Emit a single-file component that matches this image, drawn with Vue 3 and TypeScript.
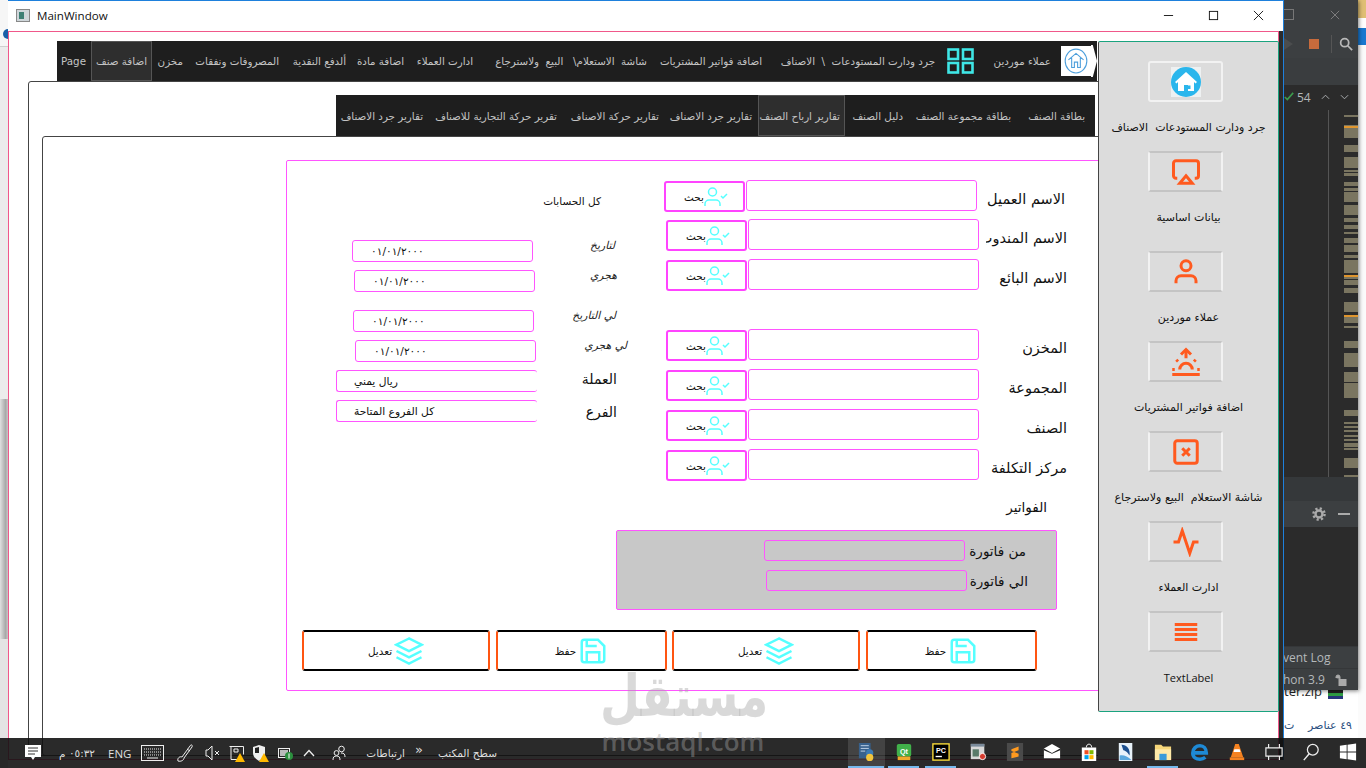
<script setup lang="ts">
interface Tab {
  label: string;
  width: number;
  pad?: number;
  icon?: string;
  active?: boolean;
}

const outerTabs: Tab[] = [
  { label: 'عملاء موردين', width: 112, pad: 6, icon: 'home' },
  { label: 'جرد ودارت المستودعات  \\  الاصناف', width: 218, pad: 11, icon: 'grid' },
  { label: 'اضافة فواتير المشتريات', width: 115 },
  { label: 'شاشة  الاستعلام\\   البيع  ولاسترجاع', width: 174 },
  { label: 'ادارت العملاء', width: 69 },
  { label: 'اضافة مادة', width: 58 },
  { label: 'ألدفع النقدية', width: 67 },
  { label: 'المصروفات ونفقات', width: 96 },
  { label: 'مخزن', width: 36 },
  { label: 'اضافة صنف', width: 61, active: true },
  { label: 'Page', width: 34 },
];

const innerTabs: Tab[] = [
  { label: 'بطاقة الصنف', width: 79, pad: 10 },
  { label: 'بطاقة مجموعة الصنف', width: 108 },
  { label: 'دليل الصنف', width: 63 },
  { label: 'تقارير ارباح الصنف', width: 87, active: true },
  { label: 'تقارير جرد الاصناف', width: 94, pad: 6 },
  { label: 'تقارير حركة الاصناف', width: 102 },
  { label: 'تقرير حركة التجارية للاصناف', width: 134 },
  { label: 'تقارير جرد الاصناف', width: 92 },
];

const searchRows = [
  { label: 'الاسم العميل', cls: 'first' },
  { label: 'الاسم المندوب', cls: '' },
  { label: 'الاسم البائع', cls: 'before-gap' },
  { label: 'المخزن', cls: '' },
  { label: 'المجموعة', cls: '' },
  { label: 'الصنف', cls: '' },
  { label: 'مركز التكلفة', cls: '' },
];

const dateRows = [
  { label: 'لتاريخ', value: '٠١/٠١/٢٠٠٠', cls: 'd1 small' },
  { label: 'هجري', value: '٠١/٠١/٢٠٠٠', cls: 'd2 small' },
  { label: 'لي التاريخ', value: '٠١/٠١/٢٠٠٠', cls: 'd3 small' },
  { label: 'لي هجري', value: '٠١/٠١/٢٠٠٠', cls: 'd4 small' },
  { label: 'العملة', value: 'ريال يمني', cls: 'd5 combo' },
  { label: 'الفرع', value: 'كل الفروع المتاحة', cls: 'd6 combo' },
];

const sideItems = [
  { label: 'جرد ودارت المستودعات  الاصناف', icon: 'home', cls: 'plain' },
  { label: 'بيانات اساسية', icon: 'airplay', cls: 'tall' },
  { label: 'عملاء موردين', icon: 'user', cls: '' },
  { label: 'اضافة فواتير المشتريات', icon: 'sunrise', cls: '' },
  { label: 'شاشة الاستعلام  البيع ولاسترجاع', icon: 'x', cls: '' },
  { label: 'ادارت العملاء', icon: 'activity', cls: '' },
  { label: 'TextLabel', icon: 'menu', cls: 'latin' },
];

const actions = [
  { label: 'تعديل', icon: 'layers', cls: 'wide' },
  { label: 'حفظ', icon: 'save', cls: 'narrow' },
  { label: 'تعديل', icon: 'layers', cls: 'wide' },
  { label: 'حفظ', icon: 'save', cls: 'narrow' },
];

// overview ruler of the editor behind the window: [top, height, warning]
const marks: [number, number, boolean?][] = [
  [115, 2], [125, 1], [126, 2, true], [128, 10], [145, 7], [157, 11], [170, 2], [173, 3],
  [182, 4], [188, 3], [192, 10], [205, 10], [218, 4], [225, 4], [232, 2], [238, 5],
  [245, 7], [255, 3], [260, 5], [265, 8], [275, 2, true], [277, 2], [280, 5], [288, 5],
  [302, 10], [315, 2, true], [317, 6], [326, 2], [341, 7], [353, 14], [372, 10], [383, 15],
  [410, 6], [422, 2], [426, 2], [430, 2], [435, 2], [439, 2], [443, 4], [448, 2],
  [458, 10], [475, 2],
];

const ruler = marks.map((m, i) => ({
  gap: i === 0 ? m[0] - 110 : m[0] - marks[i - 1][0] - marks[i - 1][1],
  height: m[1],
  warn: !!m[2],
}));

const running = [true, true, true, false, false, false, false, false, true, false, false, false, false, false];
</script>

<template>
  <div class="desktop">
    <!-- what is behind the window -->
    <div class="strip-left">
      <div class="strip-top"><span class="strip-dot"></span></div>
      <div class="strip-mid"></div>
      <div class="strip-dark"></div>
      <div class="strip-end"></div>
    </div>

    <div class="far-right">
      <div class="fr-folder"></div>
      <div class="fr-blue"></div>
      <div class="fr-rest"></div>
    </div>

    <div class="desk-text">
      <div class="zip"><span>ter.zip</span><i class="rar"></i></div>
      <div class="count"><span>ت</span><span>٤٩ عناصر</span></div>
    </div>

    <div class="ide">
      <div class="ide-title">
        <span class="ide-box"></span>
        <svg class="ide-x" viewBox="0 0 12 12"><path d="M1 1l10 10M11 1L1 11" /></svg>
      </div>
      <div class="ide-tools">
        <span class="ide-run"></span>
        <span class="ide-stop"></span>
        <span class="ide-sep"></span>
        <svg class="ide-search" viewBox="0 0 16 16"><circle cx="6.5" cy="6.5" r="4.6" /><path d="M10 10l5 5" /></svg>
      </div>
      <div class="ide-tabs"></div>
      <div class="ide-status">
        <svg class="ide-check" viewBox="0 0 12 12"><path d="M1 6l3 3 7-8" /></svg>
        <span>54</span>
        <svg class="ide-chev" viewBox="0 0 10 6"><path d="M1 5l4-4 4 4" /></svg>
        <svg class="ide-chev" viewBox="0 0 10 6"><path d="M1 1l4 4 4-4" /></svg>
      </div>
      <div class="ide-code">
        <div class="ide-gutter"></div>
        <div class="ide-ruler">
          <div
            v-for="(r, i) in ruler"
            :key="i"
            :class="['mark', { warn: r.warn }]"
            :style="{ marginTop: r.gap + 'px', height: r.height + 'px' }"
          ></div>
        </div>
      </div>
      <div class="ide-split"></div>
      <div class="ide-panel">
        <svg class="ide-gear" viewBox="0 0 14 14">
          <circle cx="7" cy="7" r="5.6" class="teeth" />
          <circle cx="7" cy="7" r="3.5" class="ring" />
        </svg>
        <span class="ide-dash"></span>
      </div>
      <div class="ide-body"></div>
      <div class="ide-line">vent Log</div>
      <div class="ide-line">
        <span>hon 3.9</span>
        <svg class="ide-lock" viewBox="0 0 12 12"><path d="M1 4V3a2 2 0 0 1 4 0v2" /><rect x="4" y="5.5" width="7" height="6" /></svg>
      </div>
    </div>

    <!-- the application window -->
    <div class="window">
      <header class="titlebar">
        <span class="app-icon"><i></i></span>
        <span class="title">MainWindow</span>
        <div class="controls">
          <svg viewBox="0 0 12 12"><path d="M1 6h10" /></svg>
          <svg viewBox="0 0 12 12"><rect x="1.5" y="1.5" width="9" height="9" /></svg>
          <svg viewBox="0 0 12 12"><path d="M1 1l10 10M11 1L1 11" /></svg>
        </div>
      </header>

      <div class="client">
        <main class="main">
          <nav class="tabbar outer">
            <div
              v-for="t in outerTabs"
              :key="t.label"
              :class="['tab', { active: t.active }]"
              :style="{ width: t.width + 'px', paddingRight: (t.pad ?? 5) + 'px' }"
            >
              <span v-if="t.icon === 'home'" class="tab-home">
                <svg viewBox="0 0 24 24">
                  <ellipse cx="12" cy="12" rx="10" ry="11" />
                  <path d="M5 11l7-6 7 6M8 9v9h2.5v-5h3v5H16V9" />
                </svg>
              </span>
              <svg v-if="t.icon === 'grid'" class="tab-grid" viewBox="0 0 27 26">
                <rect x="1.5" y="1.5" width="9.5" height="9.5" />
                <rect x="16" y="1.5" width="9.5" height="9.5" />
                <rect x="1.5" y="15" width="9.5" height="9.5" />
                <rect x="16" y="15" width="9.5" height="9.5" />
              </svg>
              <span class="tab-text">{{ t.label }}</span>
            </div>
            <span class="scroll-mark"></span>
          </nav>

          <div class="pane outer-pane">
            <nav class="tabbar inner">
              <div
                v-for="(t, i) in innerTabs"
                :key="i"
                :class="['tab', { active: t.active }]"
                :style="{ width: t.width + 'px', paddingRight: (t.pad ?? 5) + 'px' }"
              >
                <span class="tab-text">{{ t.label }}</span>
              </div>
            </nav>

            <div class="pane inner-pane">
              <section class="form">
                <div class="form-top">
                  <div class="col-left">
                    <div class="all-accounts">كل الحسابات</div>
                    <div v-for="d in dateRows" :key="d.label" :class="['date-row', d.cls]">
                      <div class="field"><span>{{ d.value }}</span></div>
                      <label>{{ d.label }}</label>
                    </div>
                  </div>

                  <div class="col-right">
                    <div v-for="r in searchRows" :key="r.label" :class="['search-row', r.cls]">
                      <button class="search-btn">
                        <span>بحث</span>
                        <svg viewBox="0 0 24 24">
                          <path d="M16 21v-2a4 4 0 0 0-4-4H5a4 4 0 0 0-4 4v2" />
                          <circle cx="8.5" cy="7" r="4" />
                          <polyline points="17 11 19 13 23 9" />
                        </svg>
                      </button>
                      <div class="input"></div>
                      <label>{{ r.label }}</label>
                    </div>
                  </div>
                </div>

                <div class="invoices-title">الفواتير</div>

                <div class="invoices">
                  <div class="inv-row one">
                    <div class="input"></div>
                    <label>من فاتورة</label>
                  </div>
                  <div class="inv-row two">
                    <div class="input"></div>
                    <label>الي فاتورة</label>
                  </div>
                </div>

                <div class="actions">
                  <button v-for="(a, i) in actions" :key="i" :class="['action', a.cls]">
                    <span>{{ a.label }}</span>
                    <svg v-if="a.icon === 'layers'" viewBox="0 0 24 24">
                      <polygon points="12 2 2 7 12 12 22 7 12 2" />
                      <polyline points="2 17 12 22 22 17" />
                      <polyline points="2 12 12 17 22 12" />
                    </svg>
                    <svg v-else viewBox="0 0 24 24">
                      <path d="M19 21H5a2 2 0 0 1-2-2V5a2 2 0 0 1 2-2h11l5 5v11a2 2 0 0 1-2 2z" />
                      <polyline points="17 21 17 13 7 13 7 21" />
                      <polyline points="7 3 7 8 15 8" />
                    </svg>
                  </button>
                </div>
              </section>
            </div>
          </div>
        </main>

        <aside class="sidebar">
          <div v-for="s in sideItems" :key="s.icon" :class="['side-item', s.cls]">
            <div class="side-btn">
              <span v-if="s.icon === 'home'" class="home-big">
                <svg viewBox="0 0 30 30">
                  <rect width="30" height="30" fill="#eef1f2" />
                  <ellipse cx="15" cy="15" rx="15" ry="15" fill="#2ab6ec" />
                  <path fill="#fff" d="M15 5L4 15l1.5 1.5L7 15v9h6v-6h4v6h6v-9l1.5 1.5L26 15z" />
                  <rect x="15.5" y="18.5" width="4" height="3.5" fill="#2ab6ec" />
                </svg>
              </span>
              <svg v-else class="side-icon" viewBox="0 0 24 24">
                <template v-if="s.icon === 'airplay'">
                  <path d="M5 17H4a2 2 0 0 1-2-2V5a2 2 0 0 1 2-2h16a2 2 0 0 1 2 2v10a2 2 0 0 1-2 2h-1" />
                  <polygon points="12 15 17 21 7 21 12 15" />
                </template>
                <template v-if="s.icon === 'user'">
                  <path d="M20 21v-2a4 4 0 0 0-4-4H8a4 4 0 0 0-4 4v2" />
                  <circle cx="12" cy="7" r="4" />
                </template>
                <template v-if="s.icon === 'sunrise'">
                  <path d="M17 18a5 5 0 0 0-10 0" />
                  <path d="M12 2v7M4.22 10.22l1.42 1.42M1 18h2M21 18h2M18.36 11.64l1.42-1.42M23 22H1" />
                  <polyline points="8 6 12 2 16 6" />
                </template>
                <template v-if="s.icon === 'x'">
                  <rect x="3" y="3" width="18" height="18" rx="2" />
                  <path d="M9 9l6 6M15 9l-6 6" />
                </template>
                <polyline v-if="s.icon === 'activity'" points="22 12 18 12 15 21 9 3 6 12 2 12" />
                <path v-if="s.icon === 'menu'" d="M21 6H3M21 10H3M21 14H3M21 18H3" />
              </svg>
            </div>
            <div class="side-label">{{ s.label }}</div>
          </div>
        </aside>
      </div>
    </div>

    <!-- watermark -->
    <div class="watermark">
      <div class="wm-ar">مستقل</div>
      <div class="wm-en">mostaql.com</div>
    </div>

    <!-- windows taskbar -->
    <footer class="taskbar">
      <svg class="tb-notif" viewBox="0 0 16 16">
        <path fill="#fff" d="M0 0h16v12H10l-2 3-2-3H0z" />
        <path stroke="#333" d="M3 3h10M3 6h10M3 9h7" />
      </svg>
      <span class="tb-time">٠٥:٣٢ م</span>
      <span class="tb-eng">ENG</span>
      <svg class="tb-kb" viewBox="0 0 23 16">
        <rect x=".5" y=".5" width="22" height="15" fill="none" stroke="#eee" />
        <path stroke="#eee" stroke-dasharray="1 1" d="M3 4h17M3 7h17M3 10h17" />
        <path stroke="#eee" d="M6 13h11" />
      </svg>
      <svg class="tb-pen" viewBox="0 0 16 18">
        <path fill="none" stroke="#eee" d="M1 17c-1-3 2-5 4-4l8-11c1-2 3-1 2 1L7 14c0 2-3 4-6 3zM10 5l3 2" />
      </svg>
      <svg class="tb-sound" viewBox="0 0 15 16">
        <path fill="none" stroke="#eee" d="M1 5h2l4-4v14l-4-4H1zM10 6l4 4M14 6l-4 4" />
      </svg>
      <svg class="tb-net" viewBox="0 0 16 17">
        <path fill="none" stroke="#eee" d="M.5 1.5h14v8M2 1.500v13h6M5 4h4v3H5z" />
        <path fill="#ffb900" d="M11 8l5 9H6z" />
      </svg>
      <svg class="tb-shield" viewBox="0 0 16 17">
        <path fill="#eee" d="M6 0l6 2v6c0 4-3 6-6 8-3-2-6-4-6-8V2z" />
        <path fill="#222" d="M6 2v6H2V3z" />
        <path fill="#ffb900" d="M11 8l5 9H6z" />
      </svg>
      <svg class="tb-green" viewBox="0 0 15 15">
        <rect x=".5" y="2.500" width="11" height="9" fill="none" stroke="#eee" />
        <rect x="2" y="4" width="8" height="6" fill="#bbb" />
        <circle cx="11" cy="10" r="4" fill="#2c8f3e" />
        <path stroke="#fff" d="M11 7.500v5" />
      </svg>
      <svg class="tb-up" viewBox="0 0 12 8"><path fill="none" stroke="#eee" stroke-width="1.300" d="M1 7l5-5.500L11 7" /></svg>
      <svg class="tb-people" viewBox="0 0 15 16">
        <circle cx="9.500" cy="4" r="2.800" fill="none" stroke="#eee" />
        <circle cx="4.500" cy="8" r="2.400" fill="none" stroke="#eee" />
        <path fill="none" stroke="#eee" d="M1 15c0-3 1-4 3.500-4S8 12 8 15M9 8c3 0 4 1 4 4" />
      </svg>
      <span class="tb-links">ارتباطات</span>
      <span class="tb-more">»</span>
      <span class="tb-deskbar">سطح المكتب</span>

      <div class="tb-apps">
        <div v-for="(on, i) in running" :key="i" :class="['app', { on, focus: i === 0 }]">
          <svg v-if="i === 0" viewBox="0 0 20 20">
            <rect x="1" y="0" width="13" height="17" fill="#38618c" />
            <path d="M3 3h9M3 6h9M3 9h5" stroke="#cde" />
            <circle cx="13" cy="11" r="4" fill="#3b7ab5" />
            <circle cx="13" cy="16" r="4" fill="#f2c53d" />
          </svg>
          <svg v-if="i === 1" viewBox="0 0 20 20">
            <rect x="2" y="1" width="16" height="14" rx="2" fill="#41b14a" />
            <text x="10" y="12" text-anchor="middle" class="app-t">Qt</text>
            <rect x="3" y="15" width="14" height="4" fill="#f0a92c" />
          </svg>
          <svg v-if="i === 2" viewBox="0 0 20 20">
            <rect x="1" y="1" width="18" height="18" fill="#000" stroke="#ffe03a" stroke-width="1.500" />
            <text x="10" y="11" text-anchor="middle" class="app-t">PC</text>
            <path d="M4 15h7" stroke="#fff" stroke-width="1.500" />
          </svg>
          <svg v-if="i === 3" viewBox="0 0 20 20">
            <rect x="2" y="1" width="15" height="17" fill="#d8d8d8" />
            <rect x="2" y="1" width="15" height="3" fill="#7a8a9a" />
            <rect x="4" y="7" width="7" height="8" fill="#5a7a6a" />
            <circle cx="15" cy="15" r="3.500" fill="#d63b2f" stroke="#fff" />
          </svg>
          <svg v-if="i === 4" viewBox="0 0 20 20">
            <rect x="1" y="0" width="18" height="20" fill="#4a4a4a" />
            <path d="M14 4L6 7v4l8-3zM6 9l8 3v3l-8 2" fill="#ff9a1f" />
          </svg>
          <svg v-if="i === 5" viewBox="0 0 20 20">
            <path fill="#fff" d="M1 6l9-5 9 5v11H1z" />
            <path fill="#222" d="M1 6l9 5 9-5v2l-9 4-9-4z" />
          </svg>
          <svg v-if="i === 6" viewBox="0 0 20 20">
            <path fill="#fff" d="M2 5h16v15H2z" />
            <path fill="none" stroke="#fff" d="M7 5c0-5 6-5 6 0" />
            <rect x="5" y="8" width="4.500" height="4.500" fill="#f25022" />
            <rect x="10.500" y="8" width="4.500" height="4.500" fill="#7fba00" />
            <rect x="5" y="13.500" width="4.500" height="4.500" fill="#00a4ef" />
            <rect x="10.500" y="13.500" width="4.500" height="4.500" fill="#ffb900" />
          </svg>
          <svg v-if="i === 7" viewBox="0 0 20 20">
            <rect x="2" y="0" width="15" height="20" fill="#e8f2fa" />
            <path fill="#1c4f8f" d="M5 2c6 0 10 5 9 12-2-4-6-6-7-6z" />
            <path fill="#5aa7dd" d="M3 14c4-1 9 1 13 5H3z" />
          </svg>
          <svg v-if="i === 8" viewBox="0 0 20 20">
            <path fill="#f6d67a" d="M1 2h7l2 2h9v15H1z" />
            <rect x="1" y="7" width="18" height="12" fill="#ffe9a8" />
            <rect x="6" y="12" width="8" height="7" fill="#3a9ad9" />
          </svg>
          <svg v-if="i === 9" viewBox="0 0 20 20">
            <path fill="none" stroke="#1e8ad6" stroke-width="4" d="M3 11h14c0-5-3-8-7-8s-8 3-8 8 4 7 8 7c2 0 4-.5 6-2" />
          </svg>
          <svg v-if="i === 10" viewBox="0 0 20 20">
            <path fill="#f58220" d="M8 1h4l5 15H3z" />
            <path fill="#fff" d="M7 7h6l.8 3H6.200z" />
            <rect x="2" y="16" width="16" height="3" fill="#f58220" />
          </svg>
          <svg v-if="i === 11" viewBox="0 0 20 20">
            <path fill="none" stroke="#eee" stroke-width="1.300" d="M4 5V1M16 5V1M4 19v-4M16 19v-4M1 5.500h18v9H1z" />
          </svg>
          <svg v-if="i === 12" viewBox="0 0 20 20">
            <circle cx="12" cy="7.500" r="6" fill="none" stroke="#eee" stroke-width="1.400" />
            <path d="M8 12l-6 7" stroke="#eee" stroke-width="1.600" />
          </svg>
          <svg v-if="i === 13" viewBox="0 0 20 20">
            <path fill="#fff" d="M1 3l7.500-1v7.500H1zM9.500 2L19 .5v9H9.500zM1 10.500h7.500V18L1 17zM9.500 10.500H19v9L9.500 18z" />
          </svg>
        </div>
      </div>
    </footer>
  </div>
</template>

<style scoped>
.desktop {
  position: relative;
  width: 1366px;
  height: 768px;
  overflow: hidden;
  background: #fff;
  font-family: "DejaVu Sans", sans-serif;
  color: #111;
}

/* behind the window */
.strip-left {
  position: absolute;
  left: 0;
  top: 0;
  width: 8px;
  height: 768px;
  display: flex;
  flex-direction: column;
}
.strip-top {
  height: 46px;
  background: #f6f6f6;
  border-bottom: 1px solid #cfcfcf;
}
.strip-dot {
  display: block;
  width: 5px;
  height: 10px;
  margin: 29px 0 0 3px;
  border-radius: 5px 0 0 5px;
  background: #1a5fa8;
}
.strip-mid {
  height: 352px;
  background: #ececec;
}
.strip-dark {
  height: 240px;
  background: linear-gradient(90deg, #e0e0e0, #a8a8a8 70%, #c8c8c8);
}
.strip-end {
  flex: 1;
  background: #e4e4e4;
}

.far-right {
  position: absolute;
  left: 1358px;
  top: 0;
  width: 8px;
  height: 740px;
  display: flex;
  flex-direction: column;
}
.fr-folder {
  height: 18px;
  margin-bottom: 10px;
  background: #e0bf74;
}
.fr-blue {
  height: 17px;
  background: #1978d0;
}
.fr-rest {
  flex: 1;
  background: #fbfbfb;
}

.desk-text {
  position: absolute;
  left: 1284px;
  top: 690px;
  width: 82px;
  color: #222;
  font-family: "Open Sans", "DejaVu Sans", sans-serif;
  font-size: 13px;
}
.zip {
  display: flex;
  align-items: flex-end;
  gap: 6px;
  height: 9px;
  line-height: 16px;
  overflow: hidden;
}
.rar {
  width: 15px;
  height: 9px;
  flex: none;
  background: linear-gradient(#222 30%, #2f9e44 30%, #2f9e44 70%, #26367a 70%);
}
.count {
  display: flex;
  justify-content: space-between;
  width: 68px;
  margin-top: 20px;
  color: #2b5080;
  font-family: "DejaVu Sans", sans-serif;
  font-size: 11px;
}

.ide {
  position: absolute;
  left: 1270px;
  top: 0;
  width: 88px;
  height: 690px;
  display: flex;
  flex-direction: column;
  background: #2b2b2b;
  box-shadow: 1px 1px 4px rgba(0, 0, 0, 0.5);
  font-family: "Open Sans", sans-serif;
  color: #b4b8ba;
}
.ide-title {
  height: 30px;
  display: flex;
  align-items: center;
  padding-left: 13px;
  background: #3c3f41;
}
.ide-box {
  width: 9px;
  height: 9px;
  border: 1px solid #777;
}
.ide-x {
  width: 10px;
  height: 10px;
  margin-left: 36px;
  fill: none;
  stroke: #8a8a8a;
}
.ide-tools {
  height: 28px;
  display: flex;
  align-items: center;
  padding-left: 14px;
  background: #3c3f41;
}
.ide-run {
  width: 0;
  height: 0;
  border-left: 9px solid #4b4d4e;
  border-top: 6px solid transparent;
  border-bottom: 6px solid transparent;
}
.ide-stop {
  width: 10px;
  height: 10px;
  margin-left: 16px;
  background: #c76b3c;
}
.ide-sep {
  width: 1px;
  height: 18px;
  margin-left: 12px;
  background: #555;
}
.ide-search {
  width: 14px;
  height: 14px;
  margin-left: 7px;
  fill: none;
  stroke: #b8b8b8;
  stroke-width: 2;
}
.ide-tabs {
  height: 27px;
  background: #3a3d3f;
}
.ide-status {
  height: 25px;
  display: flex;
  align-items: center;
  padding-left: 14px;
  background: #2b2b2b;
  font-size: 12px;
}
.ide-check {
  width: 10px;
  height: 10px;
  margin-right: 3px;
  fill: none;
  stroke: #3c9a4c;
  stroke-width: 2;
}
.ide-chev {
  width: 9px;
  height: 6px;
  margin-left: 10px;
  fill: none;
  stroke: #b4b8ba;
}
.ide-code {
  height: 368px;
  display: flex;
  background: #2b2b2b;
}
.ide-gutter {
  width: 58px;
  border-right: 1px solid #555;
  flex: none;
}
.ide-ruler {
  width: 14px;
  margin-left: 15px;
  display: flex;
  flex-direction: column;
}
.mark {
  flex: none;
  background: #7a7560;
}
.mark.warn {
  background: #e0962f;
}
.ide-split {
  height: 24px;
  background: #35383a;
}
.ide-panel {
  height: 26px;
  display: flex;
  align-items: center;
  padding-left: 42px;
  background: #3c3f41;
}
.ide-gear {
  width: 14px;
  height: 14px;
  fill: none;
}
.ide-gear .teeth {
  stroke: #aaa;
  stroke-width: 2.4;
  stroke-dasharray: 2.2 2.2;
}
.ide-gear .ring {
  stroke: #aaa;
  stroke-width: 2.4;
}
.ide-dash {
  width: 12px;
  height: 2px;
  margin-left: 12px;
  background: #aaa;
}
.ide-body {
  height: 120px;
  background: #2b2b2b;
}
.ide-line {
  height: 21px;
  display: flex;
  align-items: center;
  padding-left: 13px;
  background: #3c3f41;
  font-size: 12px;
  white-space: nowrap;
  border-top: 1px solid #353739;
}
.ide-lock {
  width: 12px;
  height: 12px;
  margin-left: 10px;
  fill: #aaa;
  stroke: #aaa;
}

/* window */
.window {
  position: absolute;
  left: 8px;
  top: 0;
  width: 1275px;
  height: 760px;
  display: flex;
  flex-direction: column;
  border-right: 1px solid #1e80dc;
  background: #2b2b2b;
}
.titlebar {
  height: 31px;
  flex: none;
  display: flex;
  align-items: center;
  padding: 0 0 2px 8px;
  background: #fff;
  border-top: 1px solid #1e80dc;
  box-sizing: border-box;
}
.app-icon {
  width: 14px;
  height: 13px;
  display: flex;
  padding: 2px;
  box-sizing: border-box;
  background: #cfd6da;
  border: 1px solid #888;
}
.app-icon i {
  width: 5px;
  background: #3d7f74;
}
.title {
  margin-left: 7px;
  font-family: "Open Sans", sans-serif;
  font-size: 11.6px;
  color: #111;
}
.controls {
  display: flex;
  margin-left: auto;
  margin-right: 19px;
  gap: 34px;
}
.controls svg {
  width: 11px;
  height: 11px;
  fill: none;
  stroke: #111;
}

.client {
  width: 1271px;
  flex: 1;
  display: flex;
  box-sizing: border-box;
  border: 1px solid #f0588a;
  background: #fff;
  min-height: 0;
}
.main {
  width: 1089px;
  flex: none;
  overflow: hidden;
  padding-top: 9px;
  box-sizing: border-box;
}

/* tab bars */
.tabbar {
  display: flex;
  direction: rtl;
  position: relative;
  background: #1e1e1e;
}
.tabbar.outer {
  width: 1040px;
  height: 40px;
  margin-left: 48px;
}
.tabbar.inner {
  width: 759px;
  height: 41px;
  margin-left: 307px;
  margin-top: 13px;
}
.tab {
  display: flex;
  align-items: center;
  flex: none;
  box-sizing: border-box;
  color: #c4c4c4;
  font-size: 10.3px;
  white-space: pre;
}
.tab.active {
  background: #2e2e2e;
  box-shadow: inset 0 0 0 1px #555;
}
.tab-home {
  width: 30px;
  height: 30px;
  flex: none;
  margin-left: 10px;
  background: #fff;
  display: flex;
  align-items: center;
  justify-content: center;
}
.tab-home svg {
  width: 26px;
  height: 26px;
  fill: none;
  stroke: #4d9fdc;
  stroke-width: 1;
}
.tab-grid {
  width: 27px;
  height: 26px;
  flex: none;
  margin-left: 12px;
  fill: none;
  stroke: #3fe6e6;
  stroke-width: 2.6;
}
.scroll-mark {
  position: absolute;
  right: 0;
  top: 4px;
  width: 6px;
  height: 32px;
  background: #fff;
  clip-path: polygon(30% 0, 100% 50%, 30% 100%, 0 100%, 0 0);
}

/* panes */
.pane {
  box-sizing: border-box;
  border: 1px solid #444;
  border-radius: 3px;
}
.outer-pane {
  width: 1110px;
  height: 675px;
  margin-left: 19px;
  overflow: hidden;
}
.inner-pane {
  width: 1100px;
  height: 620px;
  margin-left: 13px;
  padding: 23px 0 0 243px;
}

/* form */
.form {
  width: 880px;
  height: 531px;
  box-sizing: border-box;
  border: 1px solid #ff55ff;
  border-radius: 2px;
}
.form-top {
  display: flex;
  height: 320px;
}
.col-left {
  width: 377px;
  flex: none;
  padding-top: 32px;
  box-sizing: border-box;
}
.all-accounts {
  width: 314px;
  height: 16px;
  margin-bottom: 31px;
  direction: rtl;
  text-align: right;
  font-size: 10.5px;
  line-height: 16px;
  white-space: nowrap;
}
.date-row {
  display: flex;
  height: 22px;
  margin-bottom: 8px;
}
.date-row label {
  flex: 1;
  direction: rtl;
  text-align: right;
  white-space: nowrap;
}
.date-row.small label {
  font-size: 10.8px;
  font-style: italic;
  line-height: 12px;
  color: #222;
}
.date-row.combo label {
  font-size: 14px;
  line-height: 18px;
}
.field {
  height: 22px;
  flex: none;
  display: flex;
  align-items: center;
  box-sizing: border-box;
  border: 1px solid #ff55ff;
  border-radius: 3px;
  background: #fff;
  font-size: 10.6px;
}
.small .field {
  width: 181px;
  padding-left: 18px;
  letter-spacing: 1.3px;
}
.combo .field {
  width: 201px;
  padding-left: 17px;
  border-right: none;
  font-size: 10.7px;
}
.d1 { margin-left: 65px; width: 263px; }
.d2 { margin-left: 67px; width: 263px; margin-bottom: 18px; }
.d3 { margin-left: 66px; width: 263px; }
.d4 { margin-left: 68px; width: 272px; }
.d5 { margin-left: 49px; width: 281px; }
.d6 { margin-left: 49px; width: 281px; }
.d6 label { line-height: 24px !important; }

.col-right {
  padding-top: 19px;
  width: 405px;
  flex: none;
  box-sizing: border-box;
}
.search-row {
  display: flex;
  width: 401px;
  height: 31px;
  margin-left: 2px;
  margin-bottom: 9px;
}
.search-row.first {
  margin-left: 0;
  margin-bottom: 8px;
}
.search-row.before-gap {
  margin-bottom: 39px;
}
.search-btn {
  width: 81px;
  height: 31px;
  margin-top: 1px;
  flex: none;
  display: flex;
  align-items: center;
  justify-content: center;
  padding: 0 0 0 3px;
  box-sizing: border-box;
  border: 2px solid #ff44ff;
  border-radius: 3px;
  background: #fff;
  font-family: inherit;
  font-size: 10.4px;
  color: #111;
}
.search-btn svg {
  width: 24px;
  height: 24px;
  fill: none;
  stroke: #55ffff;
  stroke-width: 1.5;
}
.input {
  width: 231px;
  height: 31px;
  flex: none;
  margin-left: 1px;
  box-sizing: border-box;
  border: 1px solid #ff55ff;
  border-radius: 3px;
  background: #fff;
}
.search-row label {
  flex: 1;
  width: 0;
  margin-left: 7px;
  padding-top: 8px;
  direction: rtl;
  overflow: hidden;
  white-space: nowrap;
  font-size: 14.5px;
  line-height: 22px;
}

.invoices-title {
  width: 760px;
  height: 20px;
  margin-top: 16px;
  direction: rtl;
  text-align: right;
  font-size: 13.5px;
  line-height: 20px;
}
.invoices {
  width: 441px;
  height: 80px;
  margin: 13px 0 20px 329px;
  padding-top: 9px;
  box-sizing: border-box;
  border: 1px solid #ff55ff;
  border-radius: 2px;
  background: #c8c8c8;
}
.inv-row {
  display: flex;
  align-items: center;
  height: 21px;
  margin-bottom: 9px;
}
.inv-row .input {
  width: 201px;
  height: 21px;
  background: #c8c8c8;
}
.inv-row.one {
  margin-left: 146px;
  width: 263px;
}
.inv-row.two {
  margin-left: 148px;
  width: 263px;
}
.inv-row label {
  flex: 1;
  direction: rtl;
  text-align: right;
  font-size: 13.5px;
  white-space: nowrap;
}
.actions {
  display: flex;
  margin-left: 15px;
  gap: 6px;
}
.action {
  height: 41px;
  flex: none;
  display: flex;
  align-items: center;
  justify-content: center;
  gap: 2px;
  padding: 0;
  box-sizing: border-box;
  border-style: solid;
  border-width: 2px;
  border-color: #000 #ff5511;
  border-radius: 3px;
  background: #fff;
  font-family: inherit;
  font-size: 10.4px;
  color: #111;
}
.action:nth-child(3) { margin-left: -1px; }
.action.wide { width: 188px; }
.action.narrow { width: 171px; }
.action svg {
  width: 30px;
  height: 30px;
  fill: none;
  stroke: #55ffff;
  stroke-width: 2;
}

/* right side menu */
.sidebar {
  width: 181px;
  height: 671px;
  flex: none;
  margin: 9px -1px 0 0;
  padding-top: 19px;
  box-sizing: border-box;
  background: #dcdcdc;
  border: 1px solid #1aa37f;
  border-left-color: #444;
  border-radius: 2px;
}
.side-item {
  height: 90px;
  display: flex;
  flex-direction: column;
  align-items: center;
}
.side-item.tall {
  height: 100px;
}
.side-btn {
  width: 75px;
  height: 41px;
  flex: none;
  margin-right: 6px;
  display: flex;
  align-items: center;
  justify-content: center;
  box-sizing: border-box;
  border-style: solid;
  border-width: 2px;
  border-color: #c4c4c4 #f2f2f2;
  border-radius: 3px;
  background: #dcdcdc;
}
.plain .side-btn {
  border-color: #f2f2f2;
}
.home-big,
.home-big svg {
  display: block;
  width: 30px;
  height: 30px;
}
.side-icon {
  width: 30px;
  height: 30px;
  fill: none;
  stroke: #ff5a1f;
  stroke-width: 2.4;
}
.side-label {
  margin-top: 17px;
  direction: rtl;
  white-space: pre;
  font-size: 11px;
  line-height: 18px;
  color: #111;
}
.latin .side-label {
  font-family: "Open Sans", sans-serif;
  font-size: 11px;
}

/* watermark */
.watermark {
  position: absolute;
  left: 600px;
  top: 672px;
  width: 166px;
  pointer-events: none;
  z-index: 3;
  text-align: center;
  color: rgba(165, 165, 165, 0.42);
}
.wm-ar {
  height: 58px;
  font-size: 46px;
  font-weight: 700;
  line-height: 58px;
  white-space: nowrap;
  transform: scaleY(1.25);
  transform-origin: 50% 85%;
}
.wm-en {
  font-family: "Open Sans", sans-serif;
  font-size: 26px;
  font-weight: 600;
  line-height: 22px;
  white-space: nowrap;
}

/* taskbar */
.taskbar {
  position: absolute;
  left: 0;
  top: 738px;
  width: 1366px;
  height: 30px;
  z-index: 2;
  display: flex;
  align-items: center;
  padding-left: 25px;
  box-sizing: border-box;
  background: rgba(16, 16, 16, 0.89);
  color: #dedede;
  font-size: 11.5px;
}
.taskbar > svg {
  flex: none;
}
.tb-notif { width: 16px; height: 16px; }
.tb-time { width: 36px; margin-left: 18px; white-space: nowrap; direction: rtl; font-size: 10.5px; }
.tb-eng { width: 23px; margin-left: 13px; font-family: "Open Sans", sans-serif; font-size: 11.5px; }
.tb-kb { width: 23px; height: 16px; margin-left: 10px; }
.tb-pen { width: 16px; height: 18px; margin-left: 13px; }
.tb-sound { width: 15px; height: 16px; margin-left: 12px; }
.tb-net { width: 16px; height: 17px; margin-left: 9px; }
.tb-shield { width: 16px; height: 17px; margin-left: 8px; }
.tb-green { width: 15px; height: 15px; margin-left: 9px; }
.tb-up { width: 12px; height: 8px; margin-left: 10px; }
.tb-people { width: 15px; height: 16px; margin-left: 17px; }
.tb-links { width: 41px; margin-left: 17px; direction: rtl; white-space: nowrap; font-size: 10.5px; }
.tb-more { width: 9px; margin: -8px 0 0 10px; font-size: 13px; }
.tb-deskbar { width: 65px; margin-left: 8px; direction: rtl; white-space: nowrap; font-size: 10.5px; }
.tb-apps {
  display: flex;
  width: 518px;
  height: 30px;
  margin-left: auto;
}
.app {
  position: relative;
  width: 37px;
  height: 30px;
  flex: none;
  display: flex;
  align-items: center;
  justify-content: center;
  box-sizing: border-box;
  padding-bottom: 3px;
}
.app svg {
  width: 18px;
  height: 18px;
}
.app.focus {
  background: rgba(255, 255, 255, 0.12);
}
.app.on::after {
  content: "";
  position: absolute;
  left: 3px;
  right: 3px;
  bottom: 0;
  height: 2px;
  background: #76b9ed;
}
.app.focus::after {
  left: 0;
  right: 1px;
}
.app-t {
  fill: #fff;
  font-family: "Liberation Sans", sans-serif;
  font-size: 8px;
  font-weight: 700;
}
</style>

<style>
html,
body {
  margin: 0;
  background: #fff;
  overflow: hidden;
}
</style>
